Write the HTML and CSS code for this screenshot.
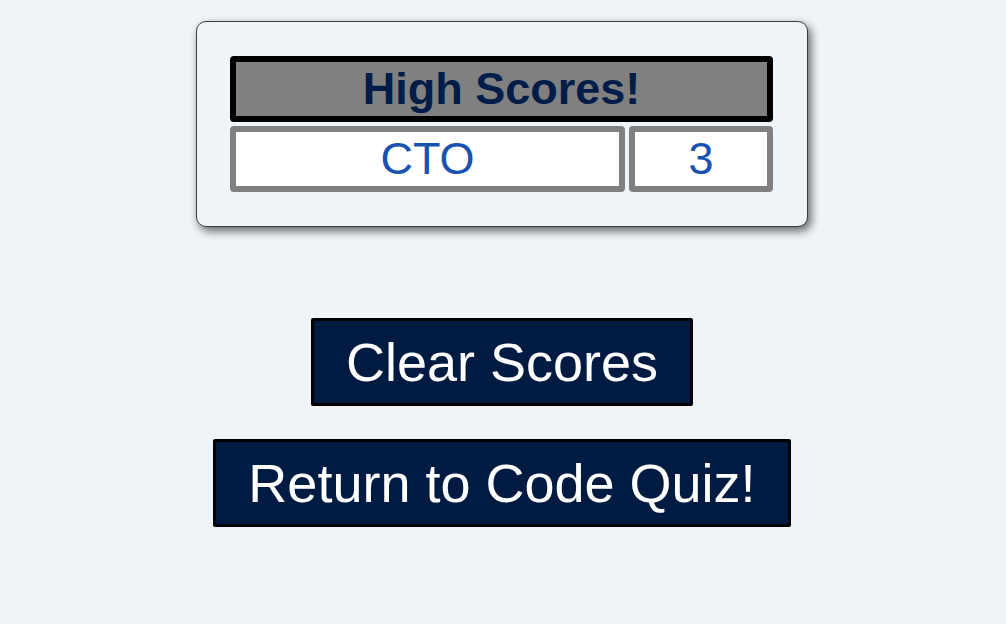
FILE: index.html
```html
<!DOCTYPE html>
<html lang="en">
<head>
<meta charset="utf-8">
<title>High Scores</title>
<link rel="stylesheet" href="styles.css">
</head>
<body>
<main class="page">
  <section class="card">
    <table class="scores">
      <thead>
        <tr><th colspan="2" class="scores-title">High Scores!</th></tr>
      </thead>
      <tbody>
        <tr><td class="cell-name">CTO</td><td class="cell-score">3</td></tr>
      </tbody>
    </table>
  </section>
  <div class="actions">
    <button class="btn" type="button">Clear Scores</button>
    <button class="btn" type="button">Return to Code Quiz!</button>
  </div>
</main>
</body>
</html>
```
FILE: styles.css
```css
html, body {
  margin: 0;
  padding: 0;
  background: #eff4f8;
  font-family: "Liberation Sans", Arial, sans-serif;
}

.page {
  display: flex;
  flex-direction: column;
  align-items: center;
  padding-top: 21px;
}

.card {
  width: 551px;
  padding: 30px 30px 30px 29px;
  background: #eff4f8;
  border: 1px solid #3c3c3c;
  border-radius: 10px;
  box-shadow: 3px 4px 10px rgba(0, 0, 0, 0.6);
  margin-right: 2px;
}

.scores {
  width: 100%;
  border-spacing: 4px;
  border-collapse: separate;
  font-size: 45px;
}

.scores th,
.scores td {
  padding: 1px;
  text-align: center;
  line-height: 52px;
  border-radius: 4px;
}

.scores-title {
  background: #808080;
  border: 6px solid #000000;
  color: #001d4a;
  font-weight: bold;
}

.cell-name,
.cell-score {
  background: #ffffff;
  border: 6px solid #808080;
  color: #1a52b2;
  font-weight: normal;
}

.cell-name {
  width: 381px;
}

.actions {
  display: flex;
  flex-direction: column;
  align-items: center;
  gap: 33px;
  margin-top: 91px;
}

.btn {
  font-family: "Liberation Sans", Arial, sans-serif;
  font-size: 54px;
  line-height: 62px;
  padding: 10px 32px;
  color: #ffffff;
  background: #001b42;
  border: 3px solid #000000;
  border-radius: 2px;
  cursor: pointer;
  margin-left: -2px;
}
```
